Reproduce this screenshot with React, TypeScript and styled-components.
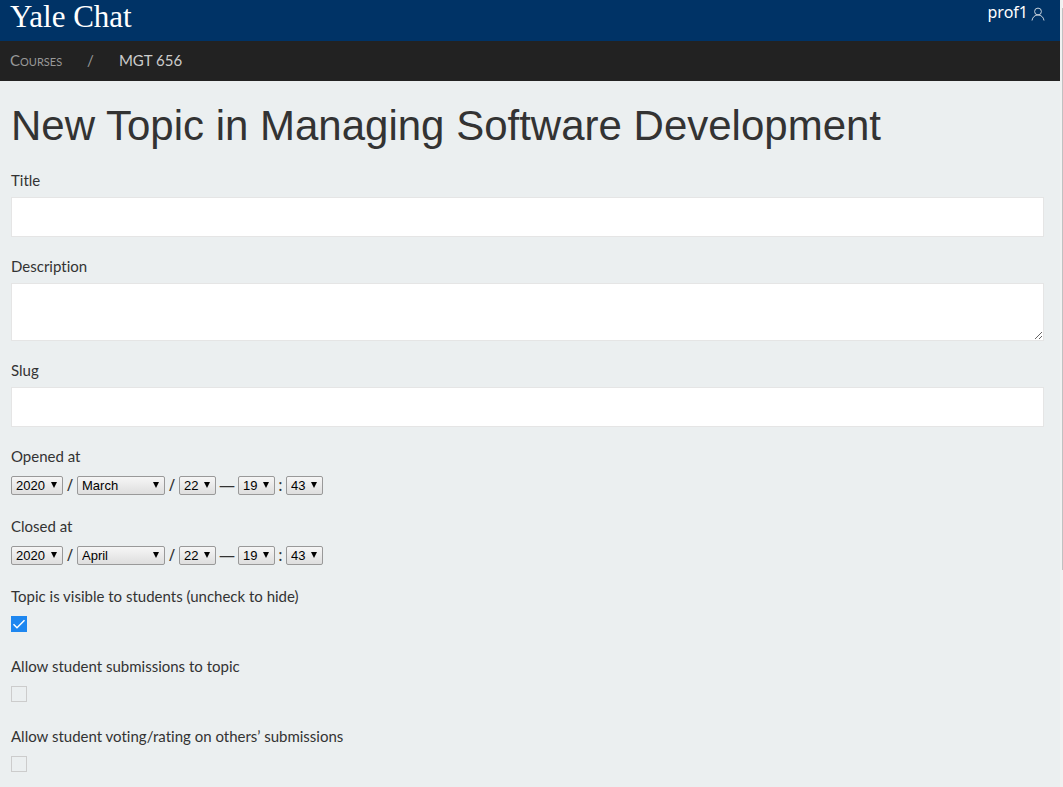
import React, { useId } from "react";
import styled, { createGlobalStyle } from "styled-components";

const GlobalStyle = createGlobalStyle`
  *, *::before, *::after { box-sizing: border-box; }
  body {
    margin: 0;
    background: #ebeff0;
    color: #333;
    font-family: Lato, "Noto Sans", sans-serif;
    font-size: 16px;
    font-variant-ligatures: none;
  }
`;

const Shell = styled.div`
  display: grid;
  grid-template-columns: minmax(0, 1fr) 3px;
  min-height: 100vh;
`;

const ScrollRail = styled.div`
  display: flex;
  justify-content: flex-end;
  padding-top: 8px;
  background: #f1f1f1;
`;

const ScrollThumb = styled.div`
  width: 1px;
  height: 72%;
  background: #c1c1c1;
`;

const TopBar = styled.header`
  display: flex;
  justify-content: space-between;
  align-items: flex-start;
  height: 41px;
  padding: 0 15px 0 10px;
  background: #003366;
`;

const Brand = styled.a`
  color: #fff;
  font-family: "Liberation Serif", serif;
  font-size: 31px;
  line-height: 34px;
  text-decoration: none;
`;

const UserLink = styled.a`
  display: flex;
  align-items: center;
  gap: 3px;
  color: #fff;
  font-family: "Noto Sans", sans-serif;
  font-size: 16px;
  line-height: 24px;
  text-decoration: none;
`;

const UserGlyph = styled.svg`
  width: 14px;
  height: 14px;
  margin-top: 4px;
  fill: none;
  stroke: #c9d3dd;
  stroke-width: 1;
`;

const Crumbs = styled.nav`
  display: flex;
  align-items: center;
  gap: 25px;
  height: 40px;
  padding: 0 10px 2px;
  background: #222;
  color: #999;
  font-size: 15px;
`;

const CrumbLink = styled.a`
  color: #999;
  font-variant-caps: small-caps;
  text-decoration: none;
`;

const CrumbCurrent = styled.span`
  color: #ccc;
`;

const Form = styled.form`
  display: flex;
  flex-direction: column;
  gap: 20px;
  padding: 20px 16px 12px 11px;
`;

const Heading = styled.h1`
  margin: 0;
  font-family: "Liberation Sans", sans-serif;
  font-size: 42px;
  font-weight: 400;
  line-height: 50px;
`;

const Field = styled.div`
  display: flex;
  flex-direction: column;
  gap: 8px;
`;

const Label = styled.label`
  font-size: 15px;
  line-height: 18px;
`;

const TextInput = styled.input`
  width: 100%;
  height: 40px;
  padding: 0 10px;
  border: 1px solid #e5e5e5;
  background: #fff;
  color: #666;
  font: inherit;
`;

const TextArea = styled.textarea`
  display: block;
  width: 100%;
  height: 58px;
  padding: 4px 10px;
  border: 1px solid #e5e5e5;
  background: #fff;
  color: #666;
  font: inherit;
  resize: vertical;
`;

const ControlRow = styled.div`
  display: flex;
  align-items: flex-start;
  height: 24px;
  padding-top: 3px;
`;

const SelectBox = styled.span<{ $width: number }>`
  position: relative;
  width: ${(p) => p.$width}px;
  height: 19px;
`;

const Select = styled.select`
  display: block;
  width: 100%;
  height: 100%;
  padding: 0 4px;
  border: 1px solid #999;
  border-radius: 2px;
  appearance: none;
  background: linear-gradient(#f6f6f6, #dedede);
  color: #000;
  font-family: "Liberation Sans", sans-serif;
  font-size: 13px;
  line-height: 17px;
`;

const Arrow = styled.svg`
  position: absolute;
  top: 6px;
  right: 6px;
  width: 6px;
  height: 6px;
  pointer-events: none;
`;

const Separator = styled.span<{ $width: number }>`
  width: ${(p) => p.$width}px;
  font-family: "Noto Sans", sans-serif;
  line-height: 18px;
  text-align: center;
`;

const CheckBoxWrap = styled.span`
  position: relative;
  width: 16px;
  height: 16px;

  input:not(:checked) + svg { display: none; }
`;

const Checkbox = styled.input`
  display: block;
  width: 16px;
  height: 16px;
  margin: 0;
  border: 1px solid #ccc;
  appearance: none;
  background: transparent;

  &:checked {
    border-color: #1e87f0;
    background: #1e87f0;
  }
`;

const Tick = styled.svg`
  position: absolute;
  inset: 0;
  width: 16px;
  height: 16px;
  fill: none;
  stroke: #fff;
  stroke-width: 1.5;
  pointer-events: none;
`;

function Picker({ width, options, value, label, id }: {
  width: number; options: string[]; value: string; label: string; id?: string;
}) {
  return (
    <SelectBox $width={width}>
      <Select id={id} aria-label={label} defaultValue={value}>
        {options.map((o) => <option key={o}>{o}</option>)}
      </Select>
      <Arrow viewBox="0 0 6 6" aria-hidden="true"><path d="M0 0h6L3 6z" fill="#000" /></Arrow>
    </SelectBox>
  );
}

const range = (from: number, to: number) =>
  Array.from({ length: to - from + 1 }, (_, i) => String(from + i).padStart(2, "0"));
const YEARS = range(2015, 2025);
const MONTHS = ["January", "February", "March", "April", "May", "June", "July",
  "August", "September", "October", "November", "December"];
const DAYS = range(1, 31);
const HOURS = range(0, 23);
const MINUTES = range(0, 59);

function DateField({ label, month }: { label: string; month: string }) {
  const id = useId();
  return (
    <Field>
      <Label htmlFor={id}>{label}</Label>
      <ControlRow>
        <Picker id={id} width={52} options={YEARS} value="2020" label={`${label} year`} />
        <Separator $width={14}>/</Separator>
        <Picker width={88} options={MONTHS} value={month} label={`${label} month`} />
        <Separator $width={14}>/</Separator>
        <Picker width={37} options={DAYS} value="22" label={`${label} day`} />
        <Separator $width={22}>—</Separator>
        <Picker width={37} options={HOURS} value="19" label={`${label} hour`} />
        <Separator $width={11}>:</Separator>
        <Picker width={37} options={MINUTES} value="43" label={`${label} minute`} />
      </ControlRow>
    </Field>
  );
}

function CheckField({ label, checked = false }: { label: string; checked?: boolean }) {
  const id = useId();
  return (
    <Field>
      <Label htmlFor={id}>{label}</Label>
      <ControlRow>
        <CheckBoxWrap>
          <Checkbox id={id} type="checkbox" defaultChecked={checked} />
          <Tick viewBox="0 0 16 16" aria-hidden="true"><path d="M2.5 8.2 6 11.7 13.5 4.2" /></Tick>
        </CheckBoxWrap>
      </ControlRow>
    </Field>
  );
}

export default function App() {
  return (
    <>
      <GlobalStyle />
      <Shell>
        <div>
          <TopBar>
            <Brand href="#">Yale Chat</Brand>
            <UserLink href="#">
              prof1
              <UserGlyph viewBox="0 0 14 14" aria-hidden="true">
                <circle cx="7" cy="4.5" r="3.4" />
                <path d="M1 13.500C1.500 10 4 8 7 8s5.500 2 6 5.500" />
              </UserGlyph>
            </UserLink>
          </TopBar>
          <Crumbs aria-label="Breadcrumb">
            <CrumbLink href="#">Courses</CrumbLink>
            <span>/</span>
            <CrumbCurrent>MGT 656</CrumbCurrent>
          </Crumbs>
          <Form>
            <Heading>New Topic in Managing Software Development</Heading>
            <Field>
              <Label htmlFor="title">Title</Label>
              <TextInput id="title" type="text" />
            </Field>
            <Field>
              <Label htmlFor="description">Description</Label>
              <TextArea id="description" />
            </Field>
            <Field>
              <Label htmlFor="slug">Slug</Label>
              <TextInput id="slug" type="text" />
            </Field>
            <DateField label="Opened at" month="March" />
            <DateField label="Closed at" month="April" />
            <CheckField label="Topic is visible to students (uncheck to hide)" checked />
            <CheckField label="Allow student submissions to topic" />
            <CheckField label="Allow student voting/rating on others’ submissions" />
          </Form>
        </div>
        <ScrollRail aria-hidden="true"><ScrollThumb /></ScrollRail>
      </Shell>
    </>
  );
}
